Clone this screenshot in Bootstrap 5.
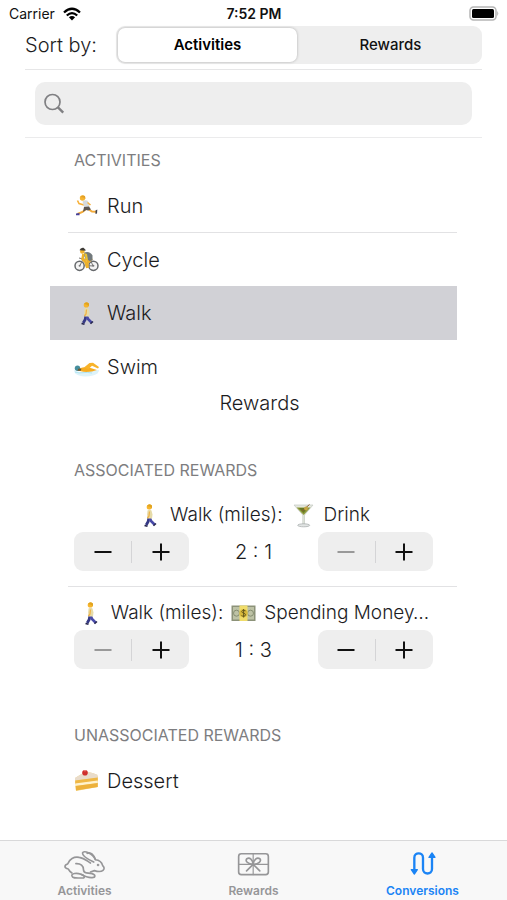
<!DOCTYPE html>
<html lang="en">
<head>
<meta charset="utf-8">
<meta name="viewport" content="width=device-width, initial-scale=1">
<title>Conversions</title>
<link href="https://cdn.jsdelivr.net/npm/bootstrap@5.3.0/dist/css/bootstrap.min.css" rel="stylesheet">
<style>
body{font-family:Inter,"Liberation Sans",sans-serif;font-size:20px;font-weight:300;line-height:28px;color:#1c1c1e;background:#fff}
.status{height:26px;padding:1px 8px 0 9px;font-size:14px;line-height:25px;font-weight:400;color:#111}
.clock{font-weight:600}
.side{flex:1 1 0}
.page{padding:0 25px}
.sorter{padding-bottom:5px;border-bottom:1px solid #e6e6e7}
.sort-label{width:91px}
.segments{background:#eee;border-radius:9px;padding:2px;gap:4px;height:38px}
.segments .btn{flex:1 1 0;border:0;border-radius:7px;padding:0;font-size:15px;font-weight:500;line-height:34px;color:#111}
.segments .active{background:#fff;font-weight:600;color:#000;box-shadow:0 0 3px rgba(0,0,0,.28)}
.finder{padding:12px 10px;border-bottom:1px solid #ebebec}
.finder label{background:#eee;border-radius:10px;height:43px;padding:0 8px}
.finder input{background:transparent;border:0;outline:0;font-size:18px}
.lists{padding:0 25px}
.caption-head{font-size:16px;line-height:24px;font-weight:400;color:#7d7d80;padding:10px 24px 7px;margin:0}
.entry{display:flex;align-items:center;gap:8px;width:100%;height:53px;border:0;background:transparent;padding:0 24px;text-align:left;color:inherit;font-weight:300;font-size:20px}
.entry.chosen{background:#d1d1d6;height:54px}
.rule{height:1px;margin-left:18px;background:#e2e2e4}
.mid-title{font-size:20px;line-height:20px;font-weight:300;margin:0 0 35px;padding-left:12px}
.pair{padding:12px 24px 15px}
.pair-name{gap:8px;margin-bottom:3px;font-size:19px}
.stepper{width:115px;height:39px;background:#eee;border-radius:9px}
.stepper .btn{flex:1 1 0;border:0;padding:0;line-height:0;color:#111}
.stepper .btn:disabled{color:#999;opacity:1}
.stepper i{width:1px;height:22px;background:#d4d4d6}
.later{margin-top:29px}
.emo{width:25px;height:25px;flex:none}
.tabs{height:60px;background:#f8f8f8;border-top:1px solid #d9d9da;padding-top:6px}
.tabs a{flex:1 1 0;color:#969698;font-size:12px;line-height:16px;font-weight:600;text-decoration:none}
.tabs a svg{display:block;height:36px}
.tabs a.current{color:#1b84f5}
</style>
</head>
<body class="min-vh-100 d-flex flex-column">
<svg class="d-none" aria-hidden="true">
<symbol id="run" viewBox="0 0 25 25"><path d="M10 12L5 10.500 3.500 7.500" stroke="#f8b13a" stroke-width="1.600" fill="none"/><path d="M12 16L8.500 19 3.500 21" stroke="#f3aa38" stroke-width="2" fill="none"/><path d="M14 16l4 2.500 4.500.2" stroke="#f3aa38" stroke-width="2" fill="none"/><path d="M8.500 8.500q3-2 5.500-.5l1.500 6-5 1.500z" fill="#d6dadd"/><path d="M13.500 9.500l3 2.500" stroke="#f5b240" stroke-width="1.600"/><path d="M10 14l5-.5 2 3-3 1-2-.5-3 2z" fill="#5c5550"/><circle cx="8.500" cy="5" r="2.700" fill="#f6b432"/><path d="M6.500 4Q8 1.500 11 3l.5 3q-2-2-5-2z" fill="#e3a026"/><path d="M2 20.500l3.500-.5v2.300H2z" fill="#46409a"/><path d="M21.500 17.500l1.800-1-.3 4-1.500.5z" fill="#44444d"/></symbol>
<symbol id="cycle" viewBox="0 0 25 25"><g fill="#f4f4f4" stroke="#66696c" stroke-width="1.500"><circle cx="5.600" cy="18.800" r="4.600"/><circle cx="19.400" cy="18.800" r="4.600"/></g><path d="M6 18.500L9 12l8 .5-5 6 7 .5-3-7M5 11l4 1" fill="none" stroke="#777" stroke-width="1"/><circle cx="5.600" cy="18.800" r="1" fill="#777"/><circle cx="19.400" cy="18.800" r="1" fill="#777"/><path d="M9.500 7l-1 5 3 3 1.500 5" fill="none" stroke="#edb12b" stroke-width="2.600"/><path d="M11 12l5 1-3 3 .5 5" fill="none" stroke="#edb12b" stroke-width="3"/><path d="M10 5.500q6-2 8.500 3v5l-3 .5-5-4z" fill="#72797c"/><path d="M10 6l2 6 2 1-1-6z" fill="#e9c233"/><circle cx="8.300" cy="4.500" r="2.300" fill="#efb22e"/><path d="M5.500 3.300Q6.500.3 9.500.8l2 2v1z" fill="#3d3a35"/></symbol>
<symbol id="walk" viewBox="0 0 25 25"><path d="M12 14l-.8 4.500-2 3.500" fill="none" stroke="#363985" stroke-width="2.800"/><path d="M12.500 14l1.500 4 3.500 3.500" fill="none" stroke="#484aa8" stroke-width="2.600"/><path d="M7.500 22.500l3 .8M16.500 22.800l2.500-2.300" stroke="#25254c" stroke-width="1.500"/><path d="M10.500 7.500q2-1.500 4 0l1 4-.5 4h-4.500l-.4-4z" fill="#e6dba9"/><path d="M12.500 8.500l-.5 4.500-1.500 2" stroke="#f0b448" stroke-width="1.300" fill="none"/><circle cx="12.300" cy="4" r="2.600" fill="#f7b52c"/><path d="M10 3q2-3.300 5-.5v2.800l-2-1.500z" fill="#e0a31f"/></symbol>
<symbol id="swim" viewBox="0 0 25 25"><path d="M0 16q5 3 12.500 1.500T25 16q0 4-6 5.500-8 2-14 0-5-1.500-5-5.500z" fill="#def3fa"/><path d="M5 14.500q6-2.500 10-1l8 2.500-5 1.500q-7 1-12-.5z" fill="#f6ac20"/><path d="M10 13.500l5.500-4.500 3.500-.3 6 4.300-1 1.500-6-2.700-3.500 3.200z" fill="#f8b32a"/><circle cx="3.500" cy="14.300" r="2.700" fill="#468e9d"/><path d="M4.500 14.500l3 .2-1 2.300-3-.3z" fill="#775b2b"/><path d="M1 18q4 1.500 8 .7t9 .3" fill="none" stroke="#a5dfee" stroke-width=".8"/></symbol>
<symbol id="drink" viewBox="0 0 25 25"><path d="M3 2h19l-8.500 10v9h-1.700v-9z" fill="#e4e7df" stroke="#c3c8c2" stroke-width=".7"/><path d="M5.500 4.500h14L12.700 12z" fill="#8d9a3b"/><path d="M8 5h9l-4.500 5z" fill="#687825"/><path d="M18.500 1.500L11 8" stroke="#8c5d31" stroke-width="1"/><circle cx="15" cy="5.500" r="1.900" fill="#c6a443"/><ellipse cx="12.700" cy="22.300" rx="6" ry="1.500" fill="#e2e5e4" stroke="#a9afae" stroke-width=".8"/></symbol>
<symbol id="money" viewBox="0 0 25 25"><path d="M.5 4.500h24V20H.5z" fill="#8c9279"/><path d="M2 6h21v12.500H2z" fill="#bdc2a6"/><circle cx="5.500" cy="12.200" r="3" fill="none" stroke="#858d70"/><circle cx="19.500" cy="12.200" r="3" fill="none" stroke="#858d70"/><path d="M8.500 4.500h8V20h-8z" fill="#f0dc6a"/><circle cx="12.500" cy="12.200" r="4" fill="#d8b93b"/><path d="M14.500 9.800q-3.500-1.300-3.800.6c0 2 3.800 1.400 3.800 3.400-.2 2-3 1.600-4 .7M12.600 8v8.500" fill="none" stroke="#65591c" stroke-width="1"/></symbol>
<symbol id="cake" viewBox="0 0 25 25"><path d="M1 10L10 4.500q9-1 14 3.500v11L2 23z" fill="#f4d78b"/><path d="M1 10L10 4.500q9-1 14 3.500l-.5 2L1 12.500z" fill="#e9dccb"/><path d="M1.200 12.500l22.500-3v3.500l-22.500 3z" fill="#efb846"/><path d="M1.200 15.500l22.500-3V15l-22.500 3z" fill="#fff2cd"/><path d="M1.500 18l22.200-3v4L2 22.500z" fill="#edb13b"/><circle cx="11" cy="4.800" r="2.800" fill="#cf2f2c"/><path d="M10 3q1-1 2 0" stroke="#f58a80" fill="none"/></symbol>
<symbol id="minus" viewBox="0 0 20 20"><path d="M1.500 10h17" stroke="currentColor" stroke-width="2"/></symbol>
<symbol id="plus" viewBox="0 0 20 20"><path d="M1.500 10h17M10 1.500v17" stroke="currentColor" stroke-width="2"/></symbol>
</svg>

<header class="status d-flex">
<div class="side d-flex align-items-center">Carrier
<svg class="ms-2" width="18" height="14" viewBox="0 0 18 14" aria-label="Wi-Fi"><g fill="none" stroke="#000" stroke-width="2.300"><path d="M1 5.500q8-7.500 16 0"/><path d="M3.800 8.500q5.200-4.800 10.400 0"/></g><path d="M5.900 10.300q3.100-2.600 6.200 0L9 13.600z"/></svg></div>
<div class="clock">7:52 PM</div>
<div class="side d-flex align-items-center justify-content-end"><svg width="30" height="15" viewBox="0 0 30 15" aria-label="Battery"><rect x="1" y="1" width="26" height="13" rx="3.500" fill="#fff" stroke="#b5b5b5" stroke-width="1.500"/><rect x="3" y="3" width="22" height="9" rx="1.500"/><path d="M28.300 5q1.900 2.500 0 5z" fill="#aaa"/></svg></div>
</header>

<main class="page flex-grow-1">
<div class="sorter d-flex align-items-center">
<div class="sort-label" id="sortLabel">Sort by:</div>
<div class="segments d-flex flex-grow-1" role="group" aria-labelledby="sortLabel">
<button type="button" class="btn active" aria-pressed="true">Activities</button>
<button type="button" class="btn" aria-pressed="false">Rewards</button>
</div>
</div>
<form class="finder" role="search">
<label class="d-flex align-items-center gap-2" for="query"><svg width="22" height="22" viewBox="0 0 22 22" fill="none" stroke="#808083" stroke-width="1.700" aria-hidden="true"><circle cx="9.500" cy="9" r="7.500"/><path d="M14.700 14.200l5.500 5.500" stroke-width="2.400"/></svg>
<input class="flex-grow-1" id="query" type="search" aria-label="Search"></label>
</form>

<div class="lists">
<section>
<h2 class="caption-head">ACTIVITIES</h2>
<button type="button" class="entry"><svg class="emo"><use href="#run"/></svg>Run</button>
<div class="rule"></div>
<button type="button" class="entry"><svg class="emo"><use href="#cycle"/></svg>Cycle</button>
<button type="button" class="entry chosen"><svg class="emo"><use href="#walk"/></svg>Walk</button>
<button type="button" class="entry"><svg class="emo"><use href="#swim"/></svg>Swim</button>
</section>
<h1 class="mid-title text-center">Rewards</h1>
<section>
<h2 class="caption-head">ASSOCIATED REWARDS</h2>
<div class="pair">
<div class="pair-name d-flex align-items-center justify-content-center text-nowrap"><svg class="emo"><use href="#walk"/></svg>Walk (miles):<svg class="emo"><use href="#drink"/></svg>Drink</div>
<div class="d-flex justify-content-between align-items-center">
<div class="stepper d-flex align-items-center"><button class="btn" type="button" aria-label="Fewer miles"><svg width="20" height="20"><use href="#minus"/></svg></button><i></i><button class="btn" type="button" aria-label="More miles"><svg width="20" height="20"><use href="#plus"/></svg></button></div>
<span>2 : 1</span>
<div class="stepper d-flex align-items-center"><button class="btn" type="button" aria-label="Fewer drinks" disabled><svg width="20" height="20"><use href="#minus"/></svg></button><i></i><button class="btn" type="button" aria-label="More drinks"><svg width="20" height="20"><use href="#plus"/></svg></button></div>
</div>
</div>
<div class="rule"></div>
<div class="pair">
<div class="pair-name d-flex align-items-center justify-content-center text-nowrap"><svg class="emo"><use href="#walk"/></svg>Walk (miles):<svg class="emo"><use href="#money"/></svg>Spending Money…</div>
<div class="d-flex justify-content-between align-items-center">
<div class="stepper d-flex align-items-center"><button class="btn" type="button" aria-label="Fewer miles" disabled><svg width="20" height="20"><use href="#minus"/></svg></button><i></i><button class="btn" type="button" aria-label="More miles"><svg width="20" height="20"><use href="#plus"/></svg></button></div>
<span>1 : 3</span>
<div class="stepper d-flex align-items-center"><button class="btn" type="button" aria-label="Less money"><svg width="20" height="20"><use href="#minus"/></svg></button><i></i><button class="btn" type="button" aria-label="More money"><svg width="20" height="20"><use href="#plus"/></svg></button></div>
</div>
</div>
</section>
<section class="later">
<h2 class="caption-head">UNASSOCIATED REWARDS</h2>
<button type="button" class="entry"><svg class="emo"><use href="#cake"/></svg>Dessert</button>
</section>
</div>
</main>

<nav class="tabs d-flex" aria-label="Sections">
<a href="#" class="d-flex flex-column align-items-center"><svg width="43" viewBox="70 56 130 108" fill="none" stroke="currentColor" stroke-width="5" stroke-linecap="round" stroke-linejoin="round" aria-hidden="true"><path d="M97 134C87 128 88 124 86 122C72 120 74 110 84 107C89 92 103 84 119 87C134 89 143 98 153 104"/><path d="M163 101C148 94 128 84 129 74C132 63 160 75 168 94C182 95 188 104 190 112Q198 120 191 126C184 132 171 129 165 127L153 131"/><path d="M143 75C154 68 164 82 168 93"/><path d="M109 106C124 105 132 113 132 124Q132 132 141 134L158 136C170 140 168 148 158 148C147 149 135 144 124 138"/><path d="M124 138C112 133 94 135 97 143C99 152 112 149 132 149C137 147 134 141 127 139"/><circle cx="176" cy="110" r="1.500"/></svg>Activities</a>
<a href="#" class="d-flex flex-column align-items-center"><svg width="33" viewBox="82 49 100 108" fill="none" stroke="currentColor" stroke-width="5" stroke-linecap="round" aria-hidden="true"><rect x="87" y="69" width="90" height="63" rx="8"/><path d="M87 101h90M131 69v63" stroke-width="3.500"/><path d="M131 101C115 101 105 90 112 84C120 78 130 87 131 101C132 87 143 78 151 84C158 90 147 101 131 101L111 121M131 101L151 121"/></svg>Rewards</a>
<a href="#" class="current d-flex flex-column align-items-center" aria-current="page"><svg width="28" viewBox="115 51 84 108" fill="none" stroke="currentColor" stroke-width="7" stroke-linejoin="round" aria-hidden="true"><path d="M131 122V83C131 66 157 66 157 83V117C157 135 184 135 184 117V80"/><path d="M122 119h18l-9 13zM175 82h18l-9-13z" fill="currentColor" stroke-width="4"/></svg>Conversions</a>
</nav>
<script src="https://cdn.jsdelivr.net/npm/bootstrap@5.3.0/dist/js/bootstrap.bundle.min.js"></script>
</body>
</html>
